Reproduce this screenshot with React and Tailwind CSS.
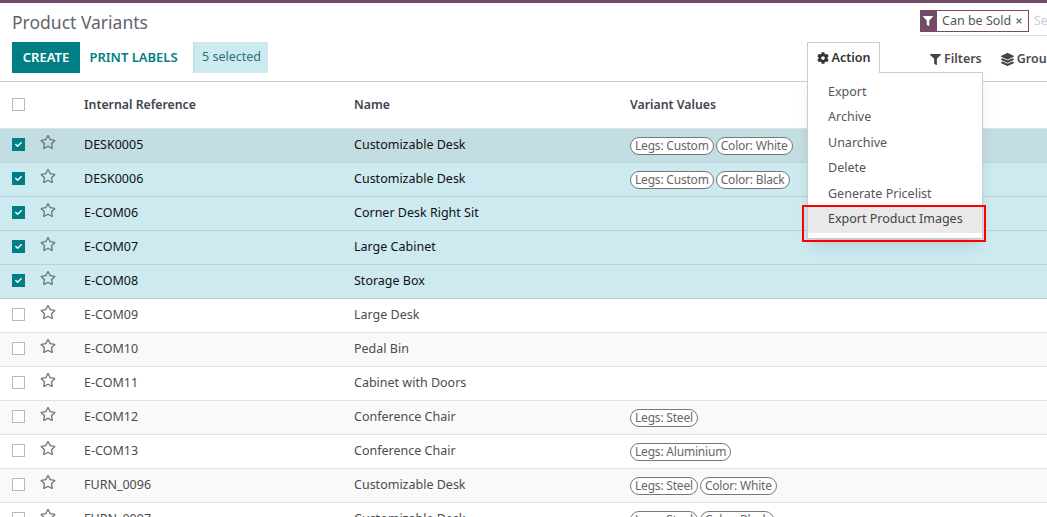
import { FaCheck, FaCog, FaFilter, FaLayerGroup, FaRegStar, FaTimes } from "react-icons/fa";

const rows = [
  { ref: "DESK0005", name: "Customizable Desk", tags: ["Legs: Custom", "Color: White"], selected: true, hover: true },
  { ref: "DESK0006", name: "Customizable Desk", tags: ["Legs: Custom", "Color: Black"], selected: true },
  { ref: "E-COM06", name: "Corner Desk Right Sit", tags: [], selected: true },
  { ref: "E-COM07", name: "Large Cabinet", tags: [], selected: true },
  { ref: "E-COM08", name: "Storage Box", tags: [], selected: true },
  { ref: "E-COM09", name: "Large Desk", tags: [] },
  { ref: "E-COM10", name: "Pedal Bin", tags: [] },
  { ref: "E-COM11", name: "Cabinet with Doors", tags: [] },
  { ref: "E-COM12", name: "Conference Chair", tags: ["Legs: Steel"] },
  { ref: "E-COM13", name: "Conference Chair", tags: ["Legs: Aluminium"] },
  { ref: "FURN_0096", name: "Customizable Desk", tags: ["Legs: Steel", "Color: White"] },
  { ref: "FURN_0097", name: "Customizable Desk", tags: ["Legs: Steel", "Color: Black"] },
];

const actions = ["Export", "Archive", "Unarchive", "Delete", "Generate Pricelist"];

const Checkbox = ({ checked }) =>
  checked ? (
    <span className="flex h-[13px] w-[13px] items-center justify-center bg-[#017e84] text-white">
      <FaCheck className="h-[7px] w-[7px]" />
    </span>
  ) : (
    <span className="block h-[13px] w-[13px] border border-[#b9b9b9] bg-white" />
  );

const Tag = ({ label }) => (
  <span className="rounded-full border border-[#777] bg-white px-[4px] text-[12px] leading-[16px] tracking-[-0.2px] text-[#666]">{label}</span>
);

const Row = ({ row, index }) => {
  let bg = "bg-white";
  if (row.selected) bg = row.hover ? "bg-[#c2dee3]" : "bg-[#cceaf0]";
  else if (index % 2 === 0) bg = "bg-[#f9f9f9]";
  const text = row.selected ? "text-[#111]" : "text-[#4c4c4c]";

  return (
    <div className={`grid h-[34px] shrink-0 grid-cols-[84px_276px_276px_1fr] items-center border-b pb-[2px] ${row.selected ? "border-[#b5d5db]" : "border-[#dee2e6]"} ${bg}`}>
      <div className="flex items-center pl-[12px]">
        <Checkbox checked={row.selected} />
        <FaRegStar className="mb-[5px] ml-[15px] h-[16px] w-[16px] text-[#6f7785]" />
      </div>
      <div className={`pt-[2px] ${text}`}>{row.ref}</div>
      <div className={`-ml-[6px] pt-[2px] ${text}`}>{row.name}</div>
      <div className="-ml-[6px] mt-[2px] flex gap-[2px]">
        {row.tags.map((tag) => <Tag key={tag} label={tag} />)}
      </div>
    </div>
  );
};

const App = () => {
  return (
    <div className="relative flex h-[517px] w-[1047px] flex-col overflow-hidden bg-white font-['Noto_Sans',sans-serif] text-[12.5px]">
      <div className="h-[3px] shrink-0 bg-[#714b67]" />

      <div className="flex h-[79px] shrink-0 justify-between border-b border-[#ccc] pl-[12px]">
        <div>
          <h1 className="mt-[7px] text-[17.5px] leading-[24px] text-[#5f6470]">Product Variants</h1>
          <div className="mt-[8px] flex items-center">
            <button className="h-[31px] w-[68px] bg-[#017e84] text-[13px] font-semibold text-white">CREATE</button>
            <button className="h-[31px] w-[107px] text-[13px] font-semibold text-[#017e84]">PRINT LABELS</button>
            <div className="ml-[6px] flex h-[31px] w-[75px] items-center border-l-[2px] border-[#bfe6ec] bg-[#cceaf0] pl-[7px] text-[#2f6f78]">5 selected</div>
          </div>
        </div>
        <div className="w-[127px] shrink-0 pt-[7px]">
          <div className="flex h-[22px] whitespace-nowrap">
            <span className="flex w-[16px] shrink-0 items-center justify-center bg-[#714b67] text-white">
              <FaFilter className="h-[10px] w-[10px]" />
            </span>
            <span className="flex w-[93px] shrink-0 items-center justify-between border border-[#714b67] pl-[5px] pr-[5px] text-[#555]">
              Can be Sold <FaTimes className="h-[8px] w-[8px] shrink-0 text-[#777]" />
            </span>
            <span className="ml-[5px] leading-[22px] text-[#c9ccd2]">Se</span>
          </div>
          <div className="mt-[3px] h-px w-full bg-[#ddd]" />
          <div className="ml-[10px] mt-[14px] flex items-center whitespace-nowrap font-semibold text-[#4c4c4c]">
            <FaFilter className="mr-[3px] h-[11px] w-[11px] shrink-0 text-[#444]" />
            <span>Filters</span>
            <FaLayerGroup className="ml-[19px] mr-[3px] h-[13px] w-[13px] shrink-0 text-[#444]" />
            <span>Group By</span>
          </div>
        </div>
      </div>

      <div className="grid h-[47px] shrink-0 grid-cols-[84px_276px_276px_1fr] items-center border-b border-[#dee2e6] text-[12.3px] font-semibold text-[#3f4450]">
        <div className="mb-[2px] pl-[12px]"><Checkbox /></div>
        <div>Internal Reference</div>
        <div className="-ml-[6px]">Name</div>
        <div className="-ml-[6px]">Variant Values</div>
      </div>

      {rows.map((row, i) => <Row key={row.ref} row={row} index={i} />)}

      <button className="absolute left-[807px] top-[42px] z-20 flex h-[31px] w-[73px] items-center justify-center gap-[3px] border border-b-0 border-[#ccc] bg-white font-semibold text-[#333]">
        <FaCog className="h-[12px] w-[12px]" /> Action
      </button>
      <div className="absolute left-[807px] top-[72px] z-10 h-[167px] w-[176px] border border-[#ccc] bg-white pt-[6.5px] shadow-lg">
        {actions.map((a) => (
          <div key={a} className="flex h-[25.5px] items-center pl-[20px] text-[#555]">{a}</div>
        ))}
        <div className="flex h-[25.5px] items-center bg-[#e9e9e9] pl-[20px] text-[#444]">Export Product Images</div>
      </div>
      <div className="absolute left-[802px] top-[205px] z-30 h-[37px] w-[184px] border-[2px] border-[#f00]" />
    </div>
  );
};

export default App;
